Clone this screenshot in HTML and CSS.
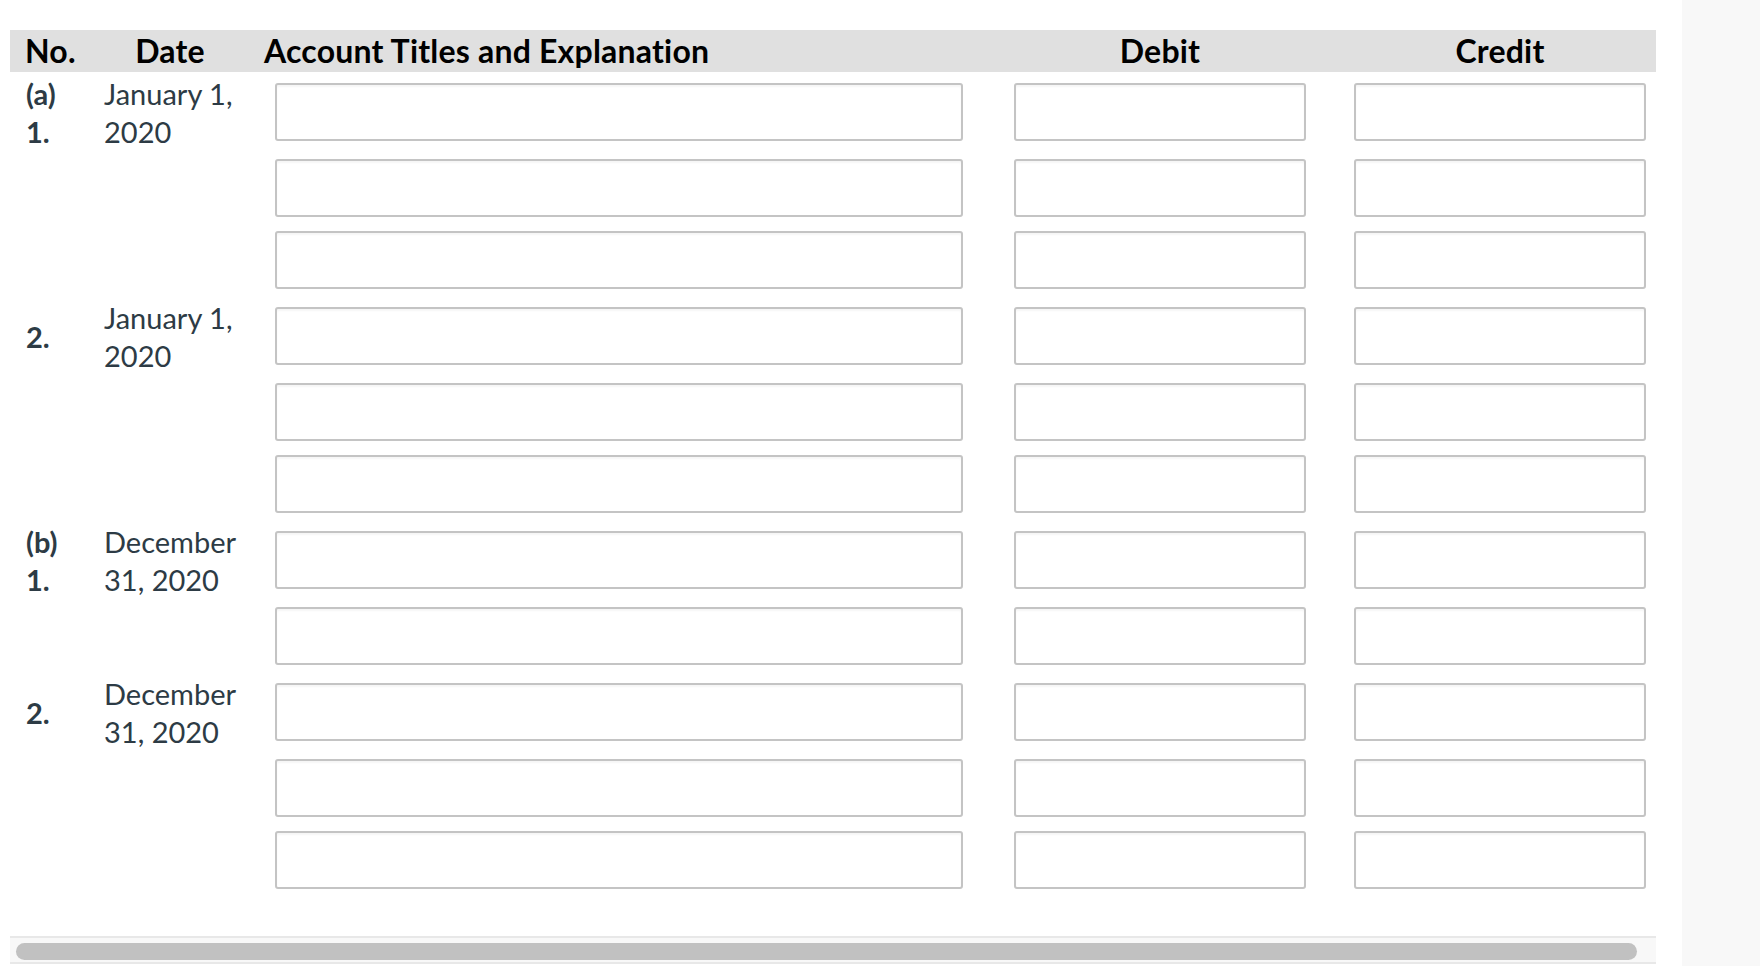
FILE: index.html
```html
<!DOCTYPE html>
<html lang="en">
<head>
<meta charset="utf-8">
<title>Journal Entries</title>
<link rel="stylesheet" href="styles.css">
</head>
<body>
<div class="app">
  <main class="main">
    <div class="table">
      <div class="head">
        <div class="h-no">No.</div>
        <div class="h-date">Date</div>
        <div class="h-acct">Account Titles and Explanation</div>
        <div class="h-debit">Debit</div>
        <div class="h-credit">Credit</div>
      </div>

      <div class="group">
        <div class="labels"><div class="no">(a)<br>1.</div><div class="date">January 1,<br>2020</div></div>
        <div class="lines">
          <div class="line"><div class="c-acct"><input class="box acct" type="text"></div><div class="c-debit"><input class="box amt" type="text"></div><div class="c-credit"><input class="box amt" type="text"></div></div>
          <div class="line"><div class="c-acct"><input class="box acct" type="text"></div><div class="c-debit"><input class="box amt" type="text"></div><div class="c-credit"><input class="box amt" type="text"></div></div>
          <div class="line"><div class="c-acct"><input class="box acct" type="text"></div><div class="c-debit"><input class="box amt" type="text"></div><div class="c-credit"><input class="box amt" type="text"></div></div>
        </div>
      </div>

      <div class="group">
        <div class="labels"><div class="no">2.</div><div class="date">January 1,<br>2020</div></div>
        <div class="lines">
          <div class="line"><div class="c-acct"><input class="box acct" type="text"></div><div class="c-debit"><input class="box amt" type="text"></div><div class="c-credit"><input class="box amt" type="text"></div></div>
          <div class="line"><div class="c-acct"><input class="box acct" type="text"></div><div class="c-debit"><input class="box amt" type="text"></div><div class="c-credit"><input class="box amt" type="text"></div></div>
          <div class="line"><div class="c-acct"><input class="box acct" type="text"></div><div class="c-debit"><input class="box amt" type="text"></div><div class="c-credit"><input class="box amt" type="text"></div></div>
        </div>
      </div>

      <div class="group">
        <div class="labels"><div class="no">(b)<br>1.</div><div class="date">December<br>31, 2020</div></div>
        <div class="lines">
          <div class="line"><div class="c-acct"><input class="box acct" type="text"></div><div class="c-debit"><input class="box amt" type="text"></div><div class="c-credit"><input class="box amt" type="text"></div></div>
          <div class="line"><div class="c-acct"><input class="box acct" type="text"></div><div class="c-debit"><input class="box amt" type="text"></div><div class="c-credit"><input class="box amt" type="text"></div></div>
        </div>
      </div>

      <div class="group">
        <div class="labels"><div class="no">2.</div><div class="date">December<br>31, 2020</div></div>
        <div class="lines">
          <div class="line"><div class="c-acct"><input class="box acct" type="text"></div><div class="c-debit"><input class="box amt" type="text"></div><div class="c-credit"><input class="box amt" type="text"></div></div>
          <div class="line"><div class="c-acct"><input class="box acct" type="text"></div><div class="c-debit"><input class="box amt" type="text"></div><div class="c-credit"><input class="box amt" type="text"></div></div>
          <div class="line"><div class="c-acct"><input class="box acct" type="text"></div><div class="c-debit"><input class="box amt" type="text"></div><div class="c-credit"><input class="box amt" type="text"></div></div>
        </div>
      </div>
    </div>

    <div class="scrollbar"><div class="thumb"></div></div>
  </main>
  <aside class="side"></aside>
</div>
</body>
</html>
```

FILE: styles.css
```css
* { box-sizing: border-box; }

html, body {
  margin: 0;
  padding: 0;
  background: #ffffff;
}

body {
  font-family: Lato, "Noto Sans", "Liberation Sans", sans-serif;
  color: #2d3b45;
  width: 1760px;
  height: 966px;
  overflow: hidden;
}

.app {
  display: flex;
  height: 966px;
}

.main {
  width: 1682px;
  padding: 30px 0 0 10px;
  background: #ffffff;
}

.side {
  flex: 1;
  background: #f8f8f8;
}

.table {
  width: 1646px;
}

/* header */
.head {
  display: flex;
  height: 42px;
  background: #e0e0e0;
  color: #000000;
  font-weight: 700;
  font-size: 32px;
  letter-spacing: 0.2px;
  line-height: 42px;
  white-space: nowrap;
}

.h-no { width: 86px; padding-left: 15px; }
.h-date { width: 148px; text-align: center; }
.h-acct { width: 745px; padding-left: 20px; }
.h-debit { width: 341px; padding-left: 25px; padding-right: 24px; text-align: center; }
.h-credit { width: 326px; padding-left: 24px; padding-right: 10px; text-align: center; }

/* groups */
.group {
  display: flex;
  padding-bottom: 4px;
}

.labels {
  display: flex;
  align-items: center;
  align-self: flex-start;
  width: 234px;
  padding-top: 3px;
  font-size: 29px;
  line-height: 38px;
}

.no {
  width: 86px;
  padding-left: 16px;
  font-weight: 700;
}

.date {
  width: 148px;
  padding-left: 8px;
  white-space: nowrap;
}

.lines {
  display: flex;
  flex-direction: column;
}

.line {
  display: flex;
  padding: 11px 0 3px;
}

.line:first-child {
  padding-bottom: 7px;
}

.c-acct { width: 745px; padding-left: 31px; }
.c-debit { width: 341px; padding-left: 25px; }
.c-credit { width: 326px; padding-left: 24px; }

.box {
  display: block;
  height: 58px;
  margin: 0;
  padding: 0 10px;
  border: 2px solid #c4c4c4;
  border-radius: 3px;
  background: #ffffff;
  box-shadow: inset 0 2px 2px rgba(0, 0, 0, 0.04);
  font: inherit;
  outline: none;
}

.box.acct { width: 688px; }
.box.amt { width: 292px; }

/* horizontal scrollbar */
.scrollbar {
  width: 1646px;
  height: 28px;
  margin-top: 40px;
  border-top: 2px solid #e8e8e8;
  border-bottom: 2px solid #e8e8e8;
  background: #f8f8f8;
  padding: 5px 19px 0 6px;
}

.thumb {
  height: 17px;
  border-radius: 9px;
  background: #c1c1c1;
}
```
